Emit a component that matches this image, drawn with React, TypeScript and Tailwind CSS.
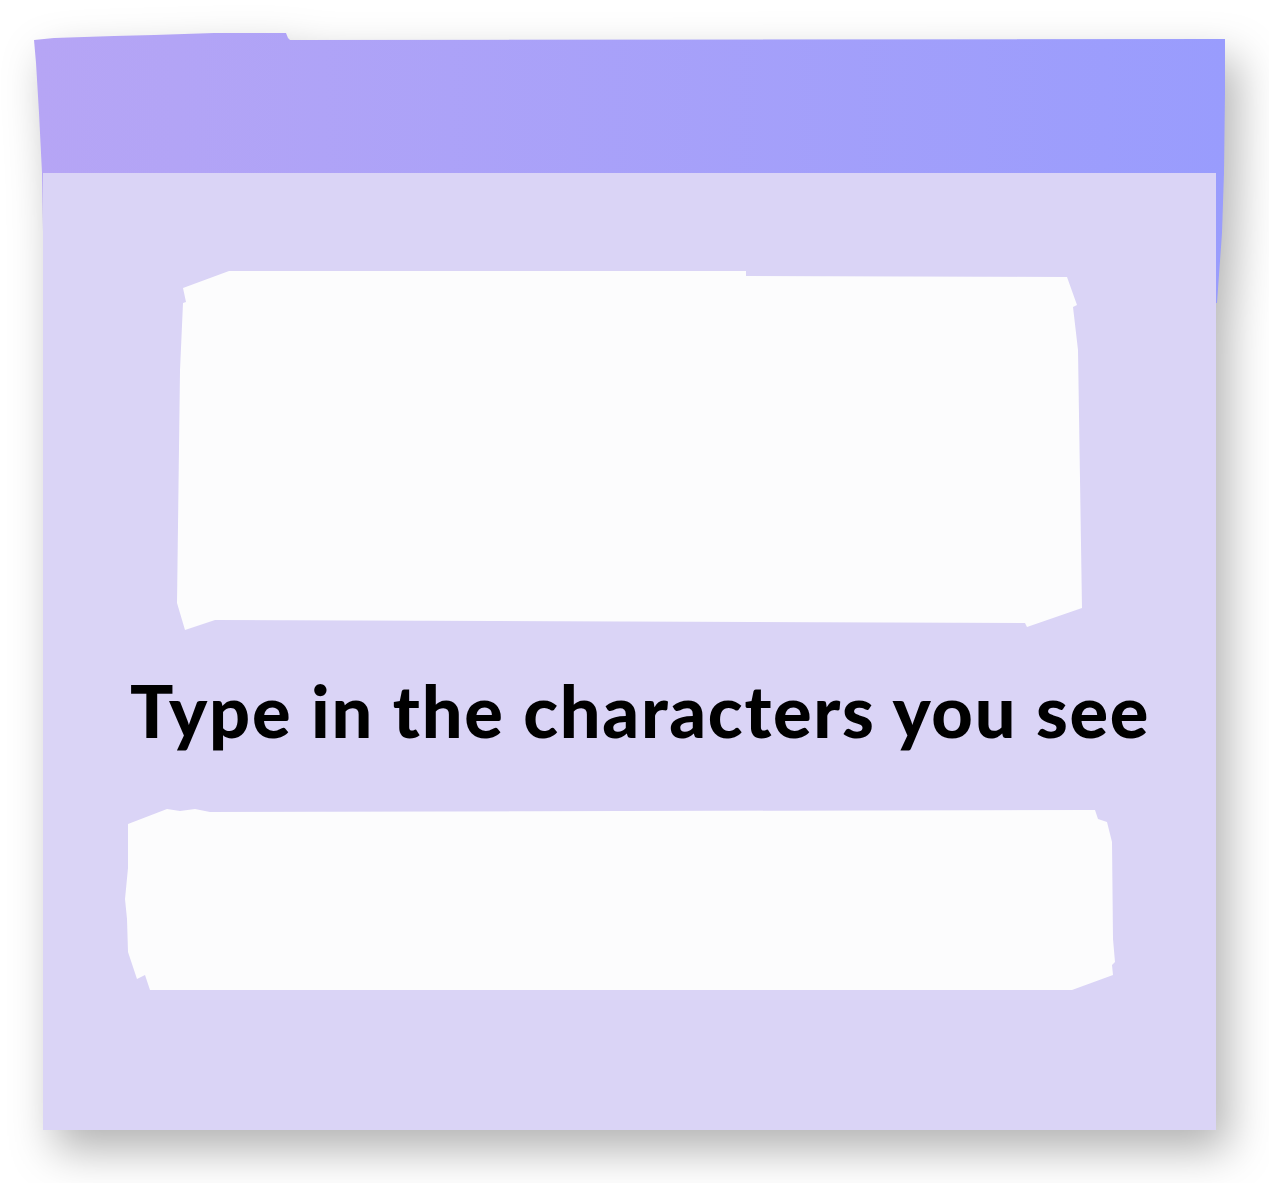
export default function App() {
  return (
    <div className="w-[1269px] h-[1183px] bg-white overflow-hidden pt-[33px] pl-[34px]">
      {/* Window card */}
      <div className="w-[1191px] flex flex-col drop-shadow-[12px_20px_22px_rgba(0,0,0,0.3)]">
        {/* Title bar, runs down a little behind the body */}
        <div className="h-[270px] bg-gradient-to-r from-[#b6a5f5] to-[#999cfd] [clip-path:polygon(0px_7px,20px_5px,50px_4px,80px_3px,120px_2px,180px_0px,252px_0px,254px_5px,256px_7px,1191px_6px,1191px_60px,1190px_140px,1188px_200px,1183px_270px,10px_270px,9px_200px,8px_140px,5px_80px,2px_30px)]" />

        {/* Body */}
        <div className="relative -mt-[130px] mx-[9px] h-[957px] bg-[#dad4f6] flex flex-col pt-[97px]">
          {/* Picture area */}
          <div className="ml-[134px] w-[906px] h-[361px] bg-[#fcfcfd] [clip-path:polygon(52px_1px,569px_1px,569px_6px,890px_7px,900px_35px,896px_37px,901px_80px,905px_338px,850px_357px,848px_353px,38px_350px,8px_360px,0px_333px,3px_100px,6px_33px,9px_32px,6px_18px)]" />

          {/* Prompt */}
          <p className="mt-[43px] ml-[21px] text-center text-[72px] leading-[72px] font-black text-black tracking-[1.7px] [font-family:Lato,'Liberation_Sans',sans-serif]">
            Type in the characters you see
          </p>

          {/* Input area */}
          <div className="mt-[62px] ml-[81px] w-[992px] h-[184px] bg-[#fcfcfd] [clip-path:polygon(4px_16px,43px_1px,56px_3px,71px_1px,86px_4px,971px_2px,974px_11px,983px_14px,988px_34px,989px_131px,991px_154px,988px_157px,989px_167px,948px_182px,26px_182px,21px_167px,13px_171px,4px_144px,3px_111px,1px_91px,4px_60px)]" />
        </div>
      </div>
    </div>
  )
}
